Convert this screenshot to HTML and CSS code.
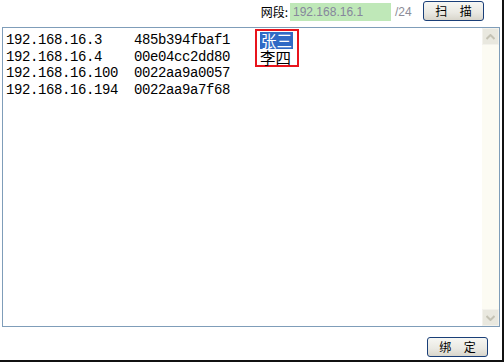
FILE: index.html
```html
<!DOCTYPE html>
<html lang="zh-CN">
<head>
<meta charset="utf-8">
<title>扫描绑定</title>
<link rel="stylesheet" href="styles.css">
</head>
<body>
<div class="top">
  <span class="label">网段:</span>
  <span class="ipfield">192.168.16.1</span>
  <span class="mask">/24</span>
  <button class="btn btn-scan">扫 描</button>
</div>
<div class="box">
  <div class="content">
<pre class="list">192.168.16.3    485b394fbaf1
192.168.16.4    00e04cc2dd80
192.168.16.100  0022aa9a0057
192.168.16.194  0022aa9a7f68</pre>
    <div class="names">
      <div class="name"><span class="sel">张三</span></div>
      <div class="name">李四</div>
    </div>
  </div>
  <div class="scrollbar">
    <div class="sb-btn"><svg width="9" height="6" viewBox="0 0 9 6"><path d="M0.5 5 L4.5 1 L8.5 5" fill="none" stroke="#c4c2b4" stroke-width="2"/></svg></div>
    <div class="sb-track"></div>
    <div class="sb-btn"><svg width="9" height="6" viewBox="0 0 9 6"><path d="M0.5 1 L4.5 5 L8.5 1" fill="none" stroke="#c4c2b4" stroke-width="2"/></svg></div>
  </div>
</div>
<div class="foot">
  <button class="btn btn-bind">绑 定</button>
</div>
</body>
</html>
```
FILE: styles.css
```css
html, body {
  margin: 0;
  padding: 0;
}
body {
  width: 502px;
  height: 360px;
  border-right: 2px solid #111;
  border-bottom: 2px solid #111;
  background: #fff;
  font-family: "Noto Sans CJK SC", "Liberation Sans", sans-serif;
  font-size: 12px;
  color: #000;
  overflow: hidden;
}
.top {
  display: flex;
  align-items: center;
  justify-content: flex-end;
  height: 21px;
  padding-right: 18px;
}
.label {
  font-size: 12px;
  line-height: 14px;
  margin-right: 2px;
  margin-top: 2px;
}
.ipfield {
  width: 98px;
  height: 18px;
  margin-top: 3px;
  padding-left: 3px;
  background: #bfe8b8;
  color: #86869c;
  font-family: "Liberation Sans", Arial, sans-serif;
  font-size: 12px;
  line-height: 18px;
}
.mask {
  margin-left: 4px;
  margin-top: 3px;
  color: #8c8c98;
  font-family: "Liberation Sans", Arial, sans-serif;
  font-size: 12px;
  width: 28px;
}
.btn {
  width: 61px;
  height: 20px;
  padding: 0 0 0 5px;
  border: 1px solid #1a3f78;
  border-radius: 3px;
  background: linear-gradient(#f7f7f3, #e9e8e2 60%, #d8d5cb);
  font-family: "Noto Sans CJK SC", sans-serif;
  font-size: 12px;
  line-height: 16px;
  letter-spacing: 5px;
  white-space: pre;
  color: #000;
}
.btn-scan {
  margin-top: 1px;
}
.box {
  margin: 6px 0 0 2px;
  width: 498px;
  height: 300px;
  box-sizing: border-box;
  border: 1px solid #7f9db9;
  display: flex;
}
.content {
  position: relative;
  flex: 1;
}
.list {
  margin: 0;
  padding: 4px 0 0 3px;
  font-family: "Liberation Mono", monospace;
  font-size: 14px;
  letter-spacing: -0.4px;
  line-height: 16.67px;
  color: #000;
}
.names {
  position: absolute;
  left: 252px;
  top: 1px;
  width: 44px;
  height: 38px;
  box-sizing: border-box;
  border: 2px solid #e8141c;
  padding: 1px 0 0 3px;
  background: #fff;
}
.name {
  font-family: "Noto Sans CJK SC", sans-serif;
  font-size: 15.5px;
  line-height: 17px;
  height: 17px;
}
.sel {
  display: inline-block;
  vertical-align: top;
  height: 17px;
  background: #316ac5;
  color: #fff;
  padding: 0 1px;
}
.scrollbar {
  width: 17px;
  display: flex;
  flex-direction: column;
  background: #fbfaf1;
}
.sb-btn {
  height: 17px;
  display: flex;
  align-items: center;
  justify-content: center;
  background: #e9e8df;
  border: 1px solid #f3f2ec;
  box-sizing: border-box;
}
.sb-track {
  flex: 1;
  background: #fcfbf3;
}
.foot {
  display: flex;
  justify-content: flex-end;
  padding: 10px 14px 0 0;
}
```
